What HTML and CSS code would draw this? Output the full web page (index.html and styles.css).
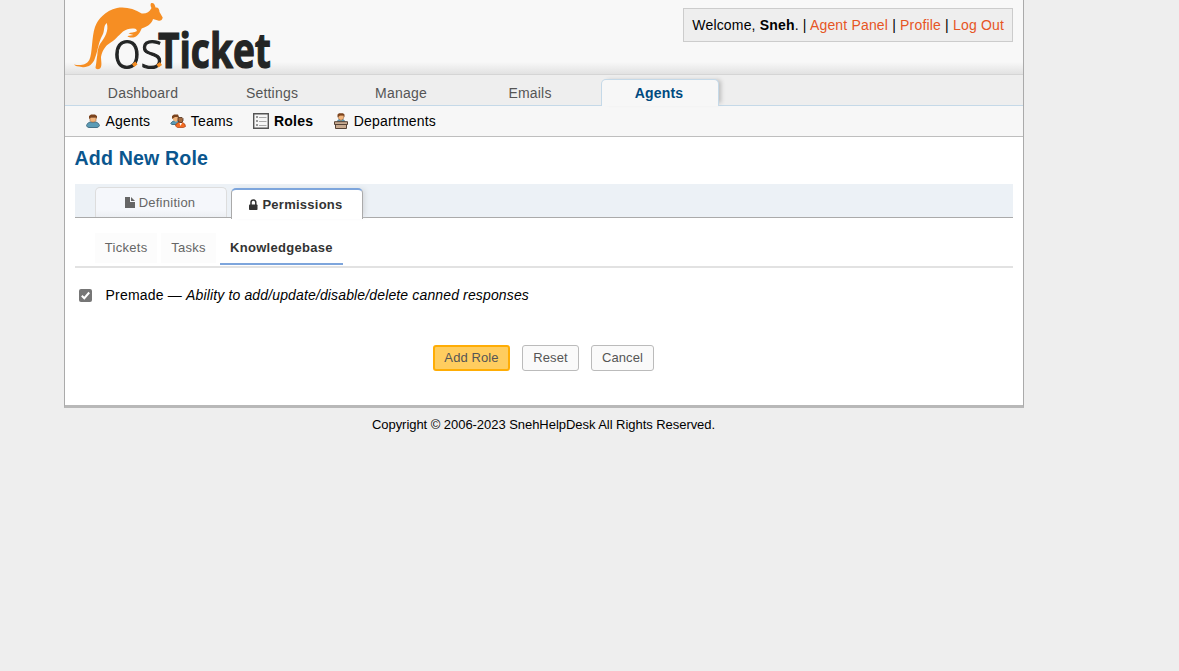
FILE: index.html
```html
<!DOCTYPE html>
<html lang="en">
<head>
<meta charset="utf-8">
<title>osTicket – Add New Role</title>
<link rel="stylesheet" href="styles.css">
</head>
<body>
<div class="container">
  <header class="header">
    <svg class="logo" width="200" height="74" viewBox="0 0 200 74" role="img" aria-label="osTicket">
      <path fill="#f68e23" d="M0 64.5C5 65.5 12 66 15.3 60C18.5 54 17.5 37 21 27C24 19 31 11 43 8C52 6.500 60 9 67.700 13.500C72 14 75.500 12 77.500 8C76 5 76.500 3 78 3C80 3 81 5 81.500 7.500C84 7 85.500 9 85.500 12L88.700 17.500C88.500 20 86 21.500 84 20.500L79 19C78 23 75 26 67.700 28.500C66 32 65 35 61 37C58 38 54 37.500 53.500 36L59.500 35L54.500 33.500C57 32 60 33 63 31L62 29C57 28 53 29 49 31.500C44 36 40 41 36 43C31 46 28 51 27 57C27 61 28.500 66 26 68.500C24 70 21.500 69 21.500 67.500C22.500 63 22.500 59 23.300 55C23.500 51 24 48 26 44C31 37 35 31 32.800 23C29 26 31 31 28.500 35C24 43 24 51 21 58C19 65 13 68 7.700 67C4 66.500 1 66 0 64.500Z"/>
      <text class="logo-thin" x="39" y="68" textLength="50" lengthAdjust="spacingAndGlyphs">os</text>
      <text class="logo-bold" x="84" y="68" textLength="113" lengthAdjust="spacingAndGlyphs">Ticket</text>
      <path d="m59 65.500 3.500-2.500m21 3 3.500-2.500" stroke="#f68e23" stroke-width="3.500"/>
    </svg>
    <p class="info">Welcome, <strong>Sneh</strong>. | <a>Agent Panel</a> | <a>Profile</a> | <a>Log Out</a></p>
  </header>
  <nav class="nav">
    <a>Dashboard</a><a>Settings</a><a>Manage</a><a>Emails</a><a class="active">Agents</a>
  </nav>
  <nav class="subnav">
    <a class="agents"><svg width="16" height="16" viewBox="0 0 16 16"><path d="M1.500 12.500Q2 10 5 9h6q3 1 3.500 3.500-1 2-2.500 2H4q-2 0-2.500-2z" fill="#5b9bb5" stroke="#447187"/><path d="M5 4.500h6v3L9.500 9h-3L5 7.500z" fill="#f2b57c" stroke="#a5693a" stroke-width=".6"/><path d="M4 6V3l2-1.500h4L12 3v3l-1-1.500H6z" fill="#7b431d"/></svg>Agents</a>
    <a class="teams"><svg width="16" height="16" viewBox="0 0 16 16"><path d="M.7 10.500q1-2 4-3h4v4H2z" fill="#5b9bb5" stroke="#447187"/><path d="M3 3.500h5v4L6 9 3 7z" fill="#f2b57c"/><path d="M2 6V3l2-1.500h4L9 4H5z" fill="#7b431d"/><path d="M5.500 13q0-2.500 3-3.500h4q3 1 3 4l-2 1h-6z" fill="#f46c22" stroke="#a83f13" stroke-width=".7"/><path d="M8 4.500h4l1 1V8l-2 2-3-2z" fill="#a36a40" stroke="#50301c" stroke-width=".8"/><path d="m9.500 10 1 3 1.500-3z" fill="#fff"/></svg>Teams</a>
    <a class="roles"><svg width="16" height="16" viewBox="0 0 16 16"><path d="M.7.7h14.600v14.600H.7z" fill="#f7f7f7" stroke="#555" stroke-width="1.400"/><path d="M6 4.500h7.500M6 8.500h7.500M6 12.500h7.500" stroke="#aaa"/><path d="M3 3h2v2H3zm0 4h2v2H3zm0 4h2v2H3z" fill="#999"/></svg>Roles</a>
    <a class="departments"><svg width="16" height="16" viewBox="0 0 16 16"><path d="M4 9q.5-2 2-2.500h4q1.500.5 2 2.500z" fill="#5b9bb5" stroke="#447187" stroke-width=".7"/><path d="M5.500 2h5v3.500L8 7.500l-2.500-2z" fill="#f2b57c" stroke="#a5693a" stroke-width=".6"/><path d="M4.500 4.500V1.500L6 .3h4l1.500 1.200v3l-1-2H7z" fill="#7b431d"/><path d="M1.500 8.700h13v2.800h-1v4h-11v-4h-1z" fill="#c8aa90" stroke="#554236"/><path d="M2 11.500h12" stroke="#554236"/></svg>Departments</a>
  </nav>
  <main class="content">
    <h2>Add New Role</h2>
    <div class="tabs">
      <a class="tab definition"><svg width="10" height="12" viewBox="0 0 10 12"><path d="M0 0h5v5h5v6H0zM6 0l4 4H6z" fill="#666"/></svg>Definition</a>
      <a class="tab current"><svg width="9" height="12" viewBox="0 0 9 12"><path d="M2 6V3.500a2.400 2.400 0 0 1 4.800 0V6" fill="none" stroke="#333" stroke-width="1.500"/><rect y="5.500" width="8.500" height="5.500" rx=".8" fill="#333"/></svg>Permissions</a>
    </div>
    <div class="subtabs"><a>Tickets</a><a>Tasks</a><a class="chosen">Knowledgebase</a></div>
    <label class="permission"><span class="check"><svg width="13" height="13" viewBox="0 0 13 13"><path d="m2.800 6.700 2.500 2.500L10.200 3.500" fill="none" stroke="#fff" stroke-width="2"/></svg></span><span>Premade — <em>Ability to add/update/disable/delete canned responses</em></span></label>
    <div class="actions"><button class="primary">Add Role</button><button class="reset">Reset</button><button class="cancel">Cancel</button></div>
  </main>
</div>
<footer class="footer">Copyright © 2006-2023 SnehHelpDesk All Rights Reserved.</footer>
</body>
</html>
```
FILE: styles.css
```css
* { box-sizing: border-box; }
body {
  margin: 0;
  padding-left: 64px;
  background: #eee;
  color: #000;
  font: 14px/20px "Liberation Sans", Arial, sans-serif;
  letter-spacing: .2px;
}
.container {
  width: 960px;
  height: 408px;
  border: 1px solid #aaa;
  border-top: 0;
  border-bottom: 3px solid #b8b8b8;
  background: #fff;
}
.header {
  display: flex;
  justify-content: space-between;
  height: 75px;
  padding: 0 10px 0 9px;
  border-bottom: 1px solid #d5d5d5;
  background: linear-gradient(#f8f8f8 0, #f8f8f8 62px, #e2e2e2 74px);
}
.logo { flex: none; overflow: visible; }
.logo text { font-family: "Open Sans", "Noto Sans", sans-serif; fill: #232525; stroke: #232525; letter-spacing: 0; }
.logo .logo-thin { font-size: 51px; font-weight: 300; stroke-width: 1.1px; }
.logo .logo-bold { font-size: 47.5px; font-weight: 700; stroke-width: 1.2px; }
.info {
  height: 34px;
  margin: 8px 0 0;
  padding: 6px 8px;
  border: 1px solid #ccc;
  background: #eee;
  letter-spacing: .175px;
  white-space: nowrap;
}
.info a { color: #e65524; }
.nav {
  display: flex;
  gap: 11px;
  height: 31px;
  padding: 4px 0 0 20px;
  border-bottom: 1px solid #c5d9e8;
  background: #eee;
}
.nav a {
  width: 118px;
  height: 27px;
  padding: 4px 2px 0 0;
  color: #555;
  text-align: center;
}
.nav .active {
  border: 1px solid #c5d9e8;
  border-bottom: 0;
  border-radius: 5px 5px 0 0;
  padding-top: 3px;
  background: #f7f7f7;
  box-shadow: 4px -1px 4px -2px #bbb;
  color: #004a80;
  font-weight: bold;
}
.subnav {
  display: flex;
  gap: 20px;
  height: 31px;
  padding: 5px 20px;
  border-bottom: 1px solid #bebebe;
  background: #f7f7f7;
}
.subnav a { display: flex; align-items: center; gap: 4.5px; }
.subnav .roles { font-weight: bold; gap: 5px; }
.content { padding: 11px 10px 0; }
h2 { margin: 0 0 16px -.5px; color: #0a568e; font-size: 19.6px; line-height: 20px; letter-spacing: .15px; }
.tabs {
  display: flex;
  gap: 4px;
  height: 34px;
  padding: 3px 0 0 20px;
  border-bottom: 1px solid #aaa;
  background: #ecf1f6;
  font-size: 13px;
  letter-spacing: .25px;
}
.tab {
  display: flex;
  align-items: center;
  justify-content: center;
  gap: 4px;
  width: 132px;
  height: 30px;
  padding-right: 2px;
  border: 1px solid #ddd;
  border-bottom: 0;
  border-radius: 5px 5px 0 0;
  background: linear-gradient(#f5f7fb 75%, #eceff3);
  color: #666;
}
.tab.current {
  height: 31px;
  margin-top: 1px;
  border-color: #aaa;
  border-top: 2px solid #7da5dc;
  background: #fff;
  box-shadow: 4px -1px 5px -2px #d5d9dd;
  color: #333;
  font-weight: bold;
}
.subtabs {
  display: flex;
  gap: 4px;
  height: 50px;
  padding: 15px 0 0 20px;
  border-bottom: 2px solid #e2e2e2;
  font-size: 13px;
  letter-spacing: .3px;
}
.subtabs a { height: 30px; padding: 5px 9.8px; background: #fcfcfc; color: #666; }
.subtabs .chosen { height: 32px; padding: 5px 10px 5px 10.3px; border-bottom: 2px solid #7da5dc; background: #fff; color: #333; font-weight: bold; }
.permission { display: flex; align-items: center; gap: 13.5px; margin: 17px 0 0 4px; }
.permission em { letter-spacing: .14px; }
.check { width: 13px; height: 13px; border-radius: 2px; background: #767676; }
.check svg { display: block; }
.actions { display: flex; justify-content: center; gap: 12px; margin: 40px 1px 0 0; }
button {
  height: 26px;
  padding: 0;
  border: 1px solid #bbb;
  border-radius: 3px;
  background: #fafafa;
  color: #555;
  font: 13px/20px "Liberation Sans", Arial, sans-serif;
  letter-spacing: .1px;
}
.primary { width: 77px; border: 2px solid #ffad05; background: #ffcd5f; }
.reset { width: 57px; }
.cancel { width: 63px; }
.footer { width: 959px; margin-top: 7px; text-align: center; font-size: 13px; letter-spacing: -.045px; }
```
